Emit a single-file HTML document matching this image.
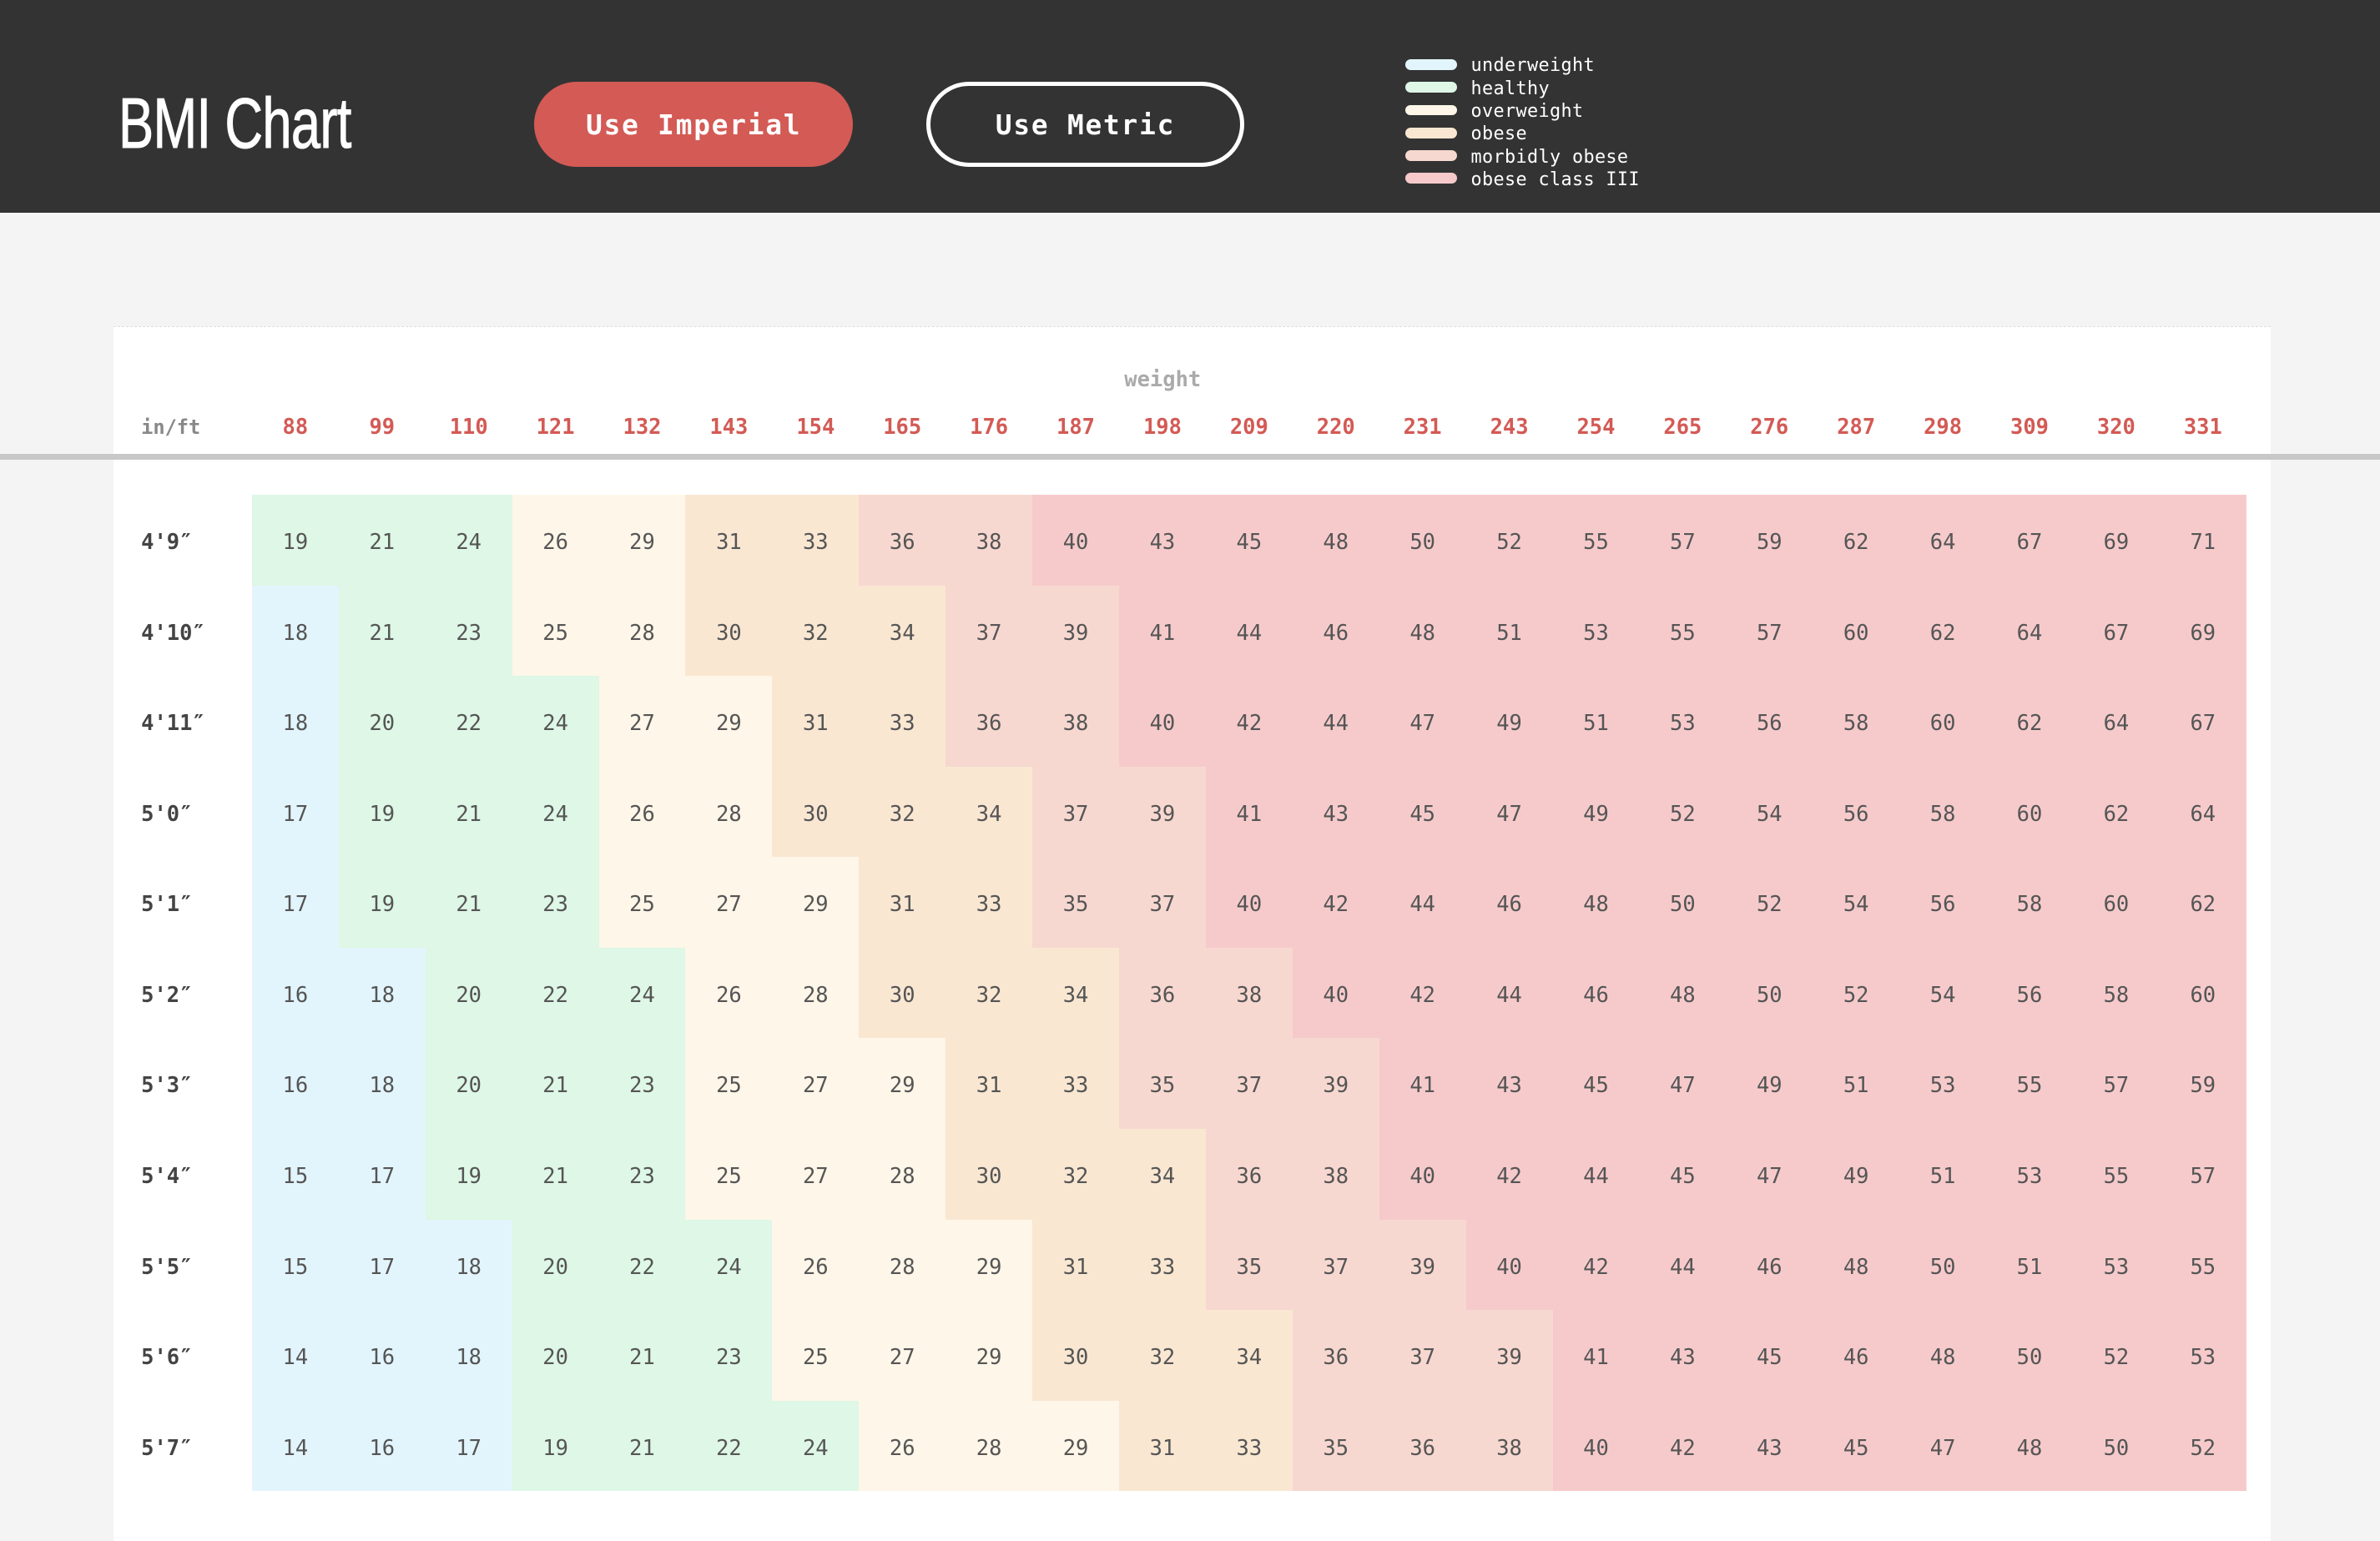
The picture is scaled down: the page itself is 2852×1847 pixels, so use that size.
<!DOCTYPE html>
<html><head><meta charset="utf-8">
<style>
html,body{margin:0;padding:0;}
body{width:1568px;height:982px;overflow:hidden;background:#f4f4f4;zoom:1.8189;font-family:"DejaVu Sans Mono","Liberation Mono",monospace;position:relative;}
.hdr{position:absolute;left:0;top:0;width:1568px;height:140px;background:#333;}
.title{position:absolute;left:78px;top:55px;font-family:"Liberation Sans Narrow","Liberation Sans",sans-serif;font-size:47px;color:#fff;transform:scaleX(.74);transform-origin:left top;letter-spacing:-.5px;-webkit-text-stroke:.6px #fff;}
.btn{position:absolute;top:54px;width:210px;height:56px;border-radius:28px;box-sizing:border-box;color:#fff;font-weight:bold;font-size:18px;text-align:center;line-height:58px;letter-spacing:1px;}
.b1{left:352px;background:#d35a55;}
.b2{left:610px;border:3px solid #fff;line-height:52px;}
.leg{position:absolute;left:926px;top:36px;color:#fff;font-size:12px;line-height:15px;letter-spacing:.2px;}
.leg div{height:15px;white-space:nowrap;}
.leg span{display:inline-block;width:34px;height:7px;border-radius:4px;margin-right:9px;vertical-align:1px;}
.card{position:absolute;left:75px;top:215px;width:1421px;height:800px;background:#fff;border-top:1px dashed #ddd;}
.wt{position:absolute;left:731px;width:70px;top:242px;text-align:center;font-size:14px;font-weight:bold;color:#aaa;}
.line{position:absolute;left:0;top:299px;width:1568px;height:4px;background:#c8c8c8;}
table{position:absolute;left:75px;top:263px;border-collapse:collapse;table-layout:fixed;}
td,th{padding:0;text-align:center;font-size:14px;color:#555;}
th{height:37px;color:#d35a55;font-weight:bold;width:57.13px;}
th.l{width:91px;text-align:left;padding-left:18px;box-sizing:border-box;color:#888;font-size:13px;}
tr.sp td{height:26px;}
tr.r td{height:59.7px;padding-top:3px;box-sizing:border-box;}
td.l{text-align:left;padding-left:18px;font-weight:bold;color:#444;background:#fff;}
.u{background:#e3f5fc}.h{background:#def7e6}.o{background:#fef6e8}.b{background:#f9e7d2}.m{background:#f7d8d0}.x{background:#f6cacb}
</style></head><body>
<div class="hdr">
<div class="title">BMI Chart</div>
<div class="btn b1">Use Imperial</div>
<div class="btn b2">Use Metric</div>
<div class="leg">
<div><span class="u"></span>underweight</div>
<div><span class="h"></span>healthy</div>
<div><span class="o"></span>overweight</div>
<div><span class="b"></span>obese</div>
<div><span class="m"></span>morbidly obese</div>
<div><span class="x"></span>obese class III</div>
</div>
</div>
<div class="card"></div>
<div class="wt">weight</div>
<table>
<tr><th class="l">in/ft</th><th>88</th><th>99</th><th>110</th><th>121</th><th>132</th><th>143</th><th>154</th><th>165</th><th>176</th><th>187</th><th>198</th><th>209</th><th>220</th><th>231</th><th>243</th><th>254</th><th>265</th><th>276</th><th>287</th><th>298</th><th>309</th><th>320</th><th>331</th></tr>
<tr class="sp"><td colspan="24"></td></tr>
<tr class="r"><td class="l">4'9″</td><td class="h">19</td><td class="h">21</td><td class="h">24</td><td class="o">26</td><td class="o">29</td><td class="b">31</td><td class="b">33</td><td class="m">36</td><td class="m">38</td><td class="x">40</td><td class="x">43</td><td class="x">45</td><td class="x">48</td><td class="x">50</td><td class="x">52</td><td class="x">55</td><td class="x">57</td><td class="x">59</td><td class="x">62</td><td class="x">64</td><td class="x">67</td><td class="x">69</td><td class="x">71</td></tr>
<tr class="r"><td class="l">4'10″</td><td class="u">18</td><td class="h">21</td><td class="h">23</td><td class="o">25</td><td class="o">28</td><td class="b">30</td><td class="b">32</td><td class="b">34</td><td class="m">37</td><td class="m">39</td><td class="x">41</td><td class="x">44</td><td class="x">46</td><td class="x">48</td><td class="x">51</td><td class="x">53</td><td class="x">55</td><td class="x">57</td><td class="x">60</td><td class="x">62</td><td class="x">64</td><td class="x">67</td><td class="x">69</td></tr>
<tr class="r"><td class="l">4'11″</td><td class="u">18</td><td class="h">20</td><td class="h">22</td><td class="h">24</td><td class="o">27</td><td class="o">29</td><td class="b">31</td><td class="b">33</td><td class="m">36</td><td class="m">38</td><td class="x">40</td><td class="x">42</td><td class="x">44</td><td class="x">47</td><td class="x">49</td><td class="x">51</td><td class="x">53</td><td class="x">56</td><td class="x">58</td><td class="x">60</td><td class="x">62</td><td class="x">64</td><td class="x">67</td></tr>
<tr class="r"><td class="l">5'0″</td><td class="u">17</td><td class="h">19</td><td class="h">21</td><td class="h">24</td><td class="o">26</td><td class="o">28</td><td class="b">30</td><td class="b">32</td><td class="b">34</td><td class="m">37</td><td class="m">39</td><td class="x">41</td><td class="x">43</td><td class="x">45</td><td class="x">47</td><td class="x">49</td><td class="x">52</td><td class="x">54</td><td class="x">56</td><td class="x">58</td><td class="x">60</td><td class="x">62</td><td class="x">64</td></tr>
<tr class="r"><td class="l">5'1″</td><td class="u">17</td><td class="h">19</td><td class="h">21</td><td class="h">23</td><td class="o">25</td><td class="o">27</td><td class="o">29</td><td class="b">31</td><td class="b">33</td><td class="m">35</td><td class="m">37</td><td class="x">40</td><td class="x">42</td><td class="x">44</td><td class="x">46</td><td class="x">48</td><td class="x">50</td><td class="x">52</td><td class="x">54</td><td class="x">56</td><td class="x">58</td><td class="x">60</td><td class="x">62</td></tr>
<tr class="r"><td class="l">5'2″</td><td class="u">16</td><td class="u">18</td><td class="h">20</td><td class="h">22</td><td class="h">24</td><td class="o">26</td><td class="o">28</td><td class="b">30</td><td class="b">32</td><td class="b">34</td><td class="m">36</td><td class="m">38</td><td class="x">40</td><td class="x">42</td><td class="x">44</td><td class="x">46</td><td class="x">48</td><td class="x">50</td><td class="x">52</td><td class="x">54</td><td class="x">56</td><td class="x">58</td><td class="x">60</td></tr>
<tr class="r"><td class="l">5'3″</td><td class="u">16</td><td class="u">18</td><td class="h">20</td><td class="h">21</td><td class="h">23</td><td class="o">25</td><td class="o">27</td><td class="o">29</td><td class="b">31</td><td class="b">33</td><td class="m">35</td><td class="m">37</td><td class="m">39</td><td class="x">41</td><td class="x">43</td><td class="x">45</td><td class="x">47</td><td class="x">49</td><td class="x">51</td><td class="x">53</td><td class="x">55</td><td class="x">57</td><td class="x">59</td></tr>
<tr class="r"><td class="l">5'4″</td><td class="u">15</td><td class="u">17</td><td class="h">19</td><td class="h">21</td><td class="h">23</td><td class="o">25</td><td class="o">27</td><td class="o">28</td><td class="b">30</td><td class="b">32</td><td class="b">34</td><td class="m">36</td><td class="m">38</td><td class="x">40</td><td class="x">42</td><td class="x">44</td><td class="x">45</td><td class="x">47</td><td class="x">49</td><td class="x">51</td><td class="x">53</td><td class="x">55</td><td class="x">57</td></tr>
<tr class="r"><td class="l">5'5″</td><td class="u">15</td><td class="u">17</td><td class="u">18</td><td class="h">20</td><td class="h">22</td><td class="h">24</td><td class="o">26</td><td class="o">28</td><td class="o">29</td><td class="b">31</td><td class="b">33</td><td class="m">35</td><td class="m">37</td><td class="m">39</td><td class="x">40</td><td class="x">42</td><td class="x">44</td><td class="x">46</td><td class="x">48</td><td class="x">50</td><td class="x">51</td><td class="x">53</td><td class="x">55</td></tr>
<tr class="r"><td class="l">5'6″</td><td class="u">14</td><td class="u">16</td><td class="u">18</td><td class="h">20</td><td class="h">21</td><td class="h">23</td><td class="o">25</td><td class="o">27</td><td class="o">29</td><td class="b">30</td><td class="b">32</td><td class="b">34</td><td class="m">36</td><td class="m">37</td><td class="m">39</td><td class="x">41</td><td class="x">43</td><td class="x">45</td><td class="x">46</td><td class="x">48</td><td class="x">50</td><td class="x">52</td><td class="x">53</td></tr>
<tr class="r"><td class="l">5'7″</td><td class="u">14</td><td class="u">16</td><td class="u">17</td><td class="h">19</td><td class="h">21</td><td class="h">22</td><td class="h">24</td><td class="o">26</td><td class="o">28</td><td class="o">29</td><td class="b">31</td><td class="b">33</td><td class="m">35</td><td class="m">36</td><td class="m">38</td><td class="x">40</td><td class="x">42</td><td class="x">43</td><td class="x">45</td><td class="x">47</td><td class="x">48</td><td class="x">50</td><td class="x">52</td></tr>
</table>
<div class="line"></div>
</body></html>
